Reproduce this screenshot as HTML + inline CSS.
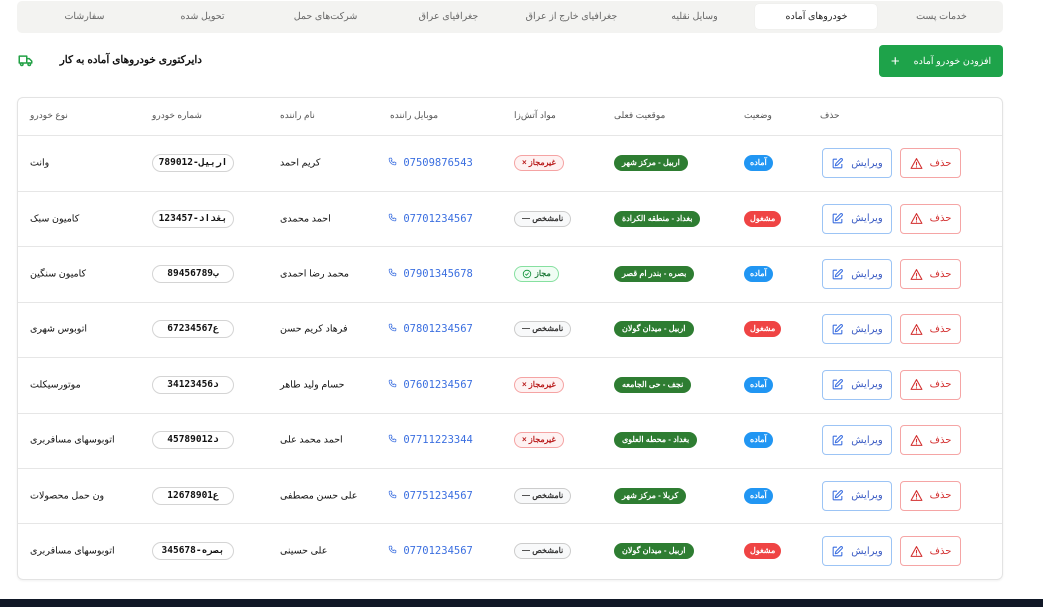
<!DOCTYPE html>
<html><head><meta charset="utf-8">
<style>
*{box-sizing:border-box;margin:0;padding:0}
body{width:1043px;height:607px;background:#fff;position:relative;overflow:hidden;font-family:"Liberation Sans","Noto Sans CJK SC",sans-serif;color:#111}
.a{position:absolute;white-space:nowrap}
.tabs{left:17px;top:1px;width:986px;height:32px;background:#f3f3f1;border-radius:5px}
.tab{position:absolute;top:10px;font-size:9.5px;color:#666;width:123px;text-align:center;direction:rtl}
.act{left:738px;top:3px;width:122px;height:25px;background:#fff;border-radius:4px;position:absolute;box-shadow:0 0 1px rgba(0,0,0,.1)}
.card{left:17px;top:97px;width:986px;height:483px;border:1px solid #e3e3e3;border-radius:6px;box-shadow:0 1px 2px rgba(0,0,0,.06)}
.hd{top:110px;font-size:9px;color:#555;direction:rtl}
.line{left:18px;width:984px;height:1px;background:#e6e6e6}
.row{position:absolute;left:0;width:1043px;height:0}
.c{position:absolute;top:0;transform:translateY(-50%);white-space:nowrap;direction:rtl}
.t{font-size:9.5px;color:#111}
.plate{height:18px;border:1px solid #d4d4d4;border-radius:9px;font-size:9.5px;line-height:16px;text-align:center;width:82px;font-family:"DejaVu Sans Mono","Liberation Mono",monospace;font-weight:bold;letter-spacing:-.5px;direction:ltr;left:152px}
.ph{font-family:"DejaVu Sans Mono","Liberation Mono",monospace;font-size:10.5px;color:#3b6fe0;direction:ltr;left:388px}
.hz{height:16px;border-radius:8px;font-size:8px;font-weight:bold;line-height:14px;padding:0 7px;border:1px solid;left:514px}
.bad{background:#fef2f2;border-color:#f5a3a3;color:#b91c1c}
.unk{background:#f8f9fa;border-color:#ccc;color:#333}
.ok{background:#f0fdf4;border-color:#86e0a0;color:#1e7a3a}
.loc{height:16px;border-radius:8px;background:#2e7d32;color:#fff;font-size:8px;font-weight:bold;line-height:16px;padding:0 8px;left:614px}
.st{height:16px;border-radius:8px;color:#fff;font-size:8px;font-weight:bold;line-height:16px;padding:0 6px;left:744px}
.rd{background:#2196f3}.bz{background:#ef4444}
.btn{height:30px;border-radius:4px;border:1px solid;font-size:10px;display:flex;align-items:center;justify-content:center;gap:7px}
.del{width:61px;border-color:#f5a5a5;color:#d32f2f;left:900px}
.ed{width:70px;border-color:#9cc4f5;color:#3b5cc4;left:822px}
.nm{left:280px}.ty{left:30px}
</style></head><body>
<div class="a tabs">
<div class="act"></div>
<div class="tab" style="left:863px">خدمات پست</div>
<div class="tab" style="left:738px;color:#222">خودروهای آماده</div>
<div class="tab" style="left:616px">وسایل نقلیه</div>
<div class="tab" style="left:493px">جغرافیای خارج از عراق</div>
<div class="tab" style="left:370px">جغرافیای عراق</div>
<div class="tab" style="left:247px">شرکت‌های حمل</div>
<div class="tab" style="left:124px">تحویل شده</div>
<div class="tab" style="left:6px">سفارشات</div>
</div>

<div class="a" style="left:18px;top:54px">
<svg width="15" height="13" viewBox="0 0 24 20" fill="none" stroke="#22a045" stroke-width="2.4" stroke-linejoin="round"><path d="M2 3h12v11H2z M14 7h4l4 4v3h-8z"/><circle cx="6" cy="16" r="2" fill="#fff"/><circle cx="18" cy="16" r="2" fill="#fff"/></svg></div>
<div class="a" style="right:841px;top:54px;font-size:10.5px;font-weight:bold;direction:rtl">دایرکتوری خودروهای آماده به کار</div>

<div class="a" style="left:879px;top:45px;width:124px;height:32px;background:#1ea34a;border-radius:4px;color:#fff;font-size:9.5px;display:flex;align-items:center;justify-content:center;gap:14px;direction:rtl">افزودن خودرو آماده <span style="font-size:15px;font-weight:300">+</span></div>

<div class="a card"></div>
<div class="a hd" style="left:820px">حذف</div>
<div class="a hd" style="left:744px">وضعیت</div>
<div class="a hd" style="left:614px">موقعیت فعلی</div>
<div class="a hd" style="left:514px">مواد آتش‌زا</div>
<div class="a hd" style="left:390px">موبایل راننده</div>
<div class="a hd" style="left:280px">نام راننده</div>
<div class="a hd" style="left:152px">شماره خودرو</div>
<div class="a hd" style="left:30px">نوع خودرو</div>
<div class="a line" style="top:135px"></div>
<div class="a line" style="top:191px"></div>
<div class="a line" style="top:246px"></div>
<div class="a line" style="top:302px"></div>
<div class="a line" style="top:357px"></div>
<div class="a line" style="top:413px"></div>
<div class="a line" style="top:468px"></div>
<div class="a line" style="top:523px"></div>

<svg width="0" height="0" style="position:absolute"><defs>
<symbol id="warn" viewBox="0 0 24 24"><path d="M12 3L2 21h20z M12 10v5 M12 18v.5" fill="none" stroke="#d32f2f" stroke-width="2" stroke-linejoin="round" stroke-linecap="round"/></symbol>
<symbol id="edit" viewBox="0 0 24 24"><path d="M11 4H5a1 1 0 0 0-1 1v14a1 1 0 0 0 1 1h14a1 1 0 0 0 1-1v-6 M17.5 3.5a2 2 0 0 1 3 3L12 15l-4 1 1-4z" fill="none" stroke="#3b6fe0" stroke-width="2" stroke-linejoin="round"/></symbol>
<symbol id="phone" viewBox="0 0 24 24"><path d="M5 3h4l2 5-2.5 1.5a11 11 0 0 0 6 6L16 13l5 2v4a2 2 0 0 1-2 2A16 16 0 0 1 3 5a2 2 0 0 1 2-2" fill="none" stroke="#3b6fe0" stroke-width="2"/></symbol>
<symbol id="chk" viewBox="0 0 24 24"><circle cx="12" cy="12" r="9" fill="none" stroke="#1e9a45" stroke-width="2.2"/><path d="M8 12l3 3 5-6" fill="none" stroke="#1e9a45" stroke-width="2.2"/></symbol>
</defs></svg>

<div class="row" style="top:163px">
<div class="c btn del">حذف <svg width="13" height="13"><use href="#warn"/></svg></div>
<div class="c btn ed">ویرایش <svg width="13" height="13"><use href="#edit"/></svg></div>
<div class="c st rd">آماده</div>
<div class="c loc">اربیل - مرکز شهر</div>
<div class="c hz bad">غیرمجاز ×</div>
<div class="c ph"><svg width="9" height="9"><use href="#phone"/></svg> 07509876543</div>
<div class="c t nm">کریم احمد</div>
<div class="c plate">789012-اربیل</div>
<div class="c t ty">وانت</div>
</div>

<div class="row" style="top:218.5px">
<div class="c btn del">حذف <svg width="13" height="13"><use href="#warn"/></svg></div>
<div class="c btn ed">ویرایش <svg width="13" height="13"><use href="#edit"/></svg></div>
<div class="c st bz">مشغول</div>
<div class="c loc">بغداد - منطقه الکرادة</div>
<div class="c hz unk">نامشخص —</div>
<div class="c ph"><svg width="9" height="9"><use href="#phone"/></svg> 07701234567</div>
<div class="c t nm">احمد محمدی</div>
<div class="c plate">123457-بغداد</div>
<div class="c t ty">کامیون سبک</div>
</div>

<div class="row" style="top:274px">
<div class="c btn del">حذف <svg width="13" height="13"><use href="#warn"/></svg></div>
<div class="c btn ed">ویرایش <svg width="13" height="13"><use href="#edit"/></svg></div>
<div class="c st rd">آماده</div>
<div class="c loc">بصره - بندر ام قصر</div>
<div class="c hz ok" style="display:flex;align-items:center;gap:3px">مجاز <svg width="10" height="10"><use href="#chk"/></svg></div>
<div class="c ph"><svg width="9" height="9"><use href="#phone"/></svg> 07901345678</div>
<div class="c t nm">محمد رضا احمدی</div>
<div class="c plate">ب89456789</div>
<div class="c t ty">کامیون سنگین</div>
</div>

<div class="row" style="top:329px">
<div class="c btn del">حذف <svg width="13" height="13"><use href="#warn"/></svg></div>
<div class="c btn ed">ویرایش <svg width="13" height="13"><use href="#edit"/></svg></div>
<div class="c st bz">مشغول</div>
<div class="c loc">اربیل - میدان گولان</div>
<div class="c hz unk">نامشخص —</div>
<div class="c ph"><svg width="9" height="9"><use href="#phone"/></svg> 07801234567</div>
<div class="c t nm">فرهاد کریم حسن</div>
<div class="c plate">ع67234567</div>
<div class="c t ty">اتوبوس شهری</div>
</div>

<div class="row" style="top:384.5px">
<div class="c btn del">حذف <svg width="13" height="13"><use href="#warn"/></svg></div>
<div class="c btn ed">ویرایش <svg width="13" height="13"><use href="#edit"/></svg></div>
<div class="c st rd">آماده</div>
<div class="c loc">نجف - حی الجامعه</div>
<div class="c hz bad">غیرمجاز ×</div>
<div class="c ph"><svg width="9" height="9"><use href="#phone"/></svg> 07601234567</div>
<div class="c t nm">حسام ولید طاهر</div>
<div class="c plate">د34123456</div>
<div class="c t ty">موتورسیکلت</div>
</div>

<div class="row" style="top:440px">
<div class="c btn del">حذف <svg width="13" height="13"><use href="#warn"/></svg></div>
<div class="c btn ed">ویرایش <svg width="13" height="13"><use href="#edit"/></svg></div>
<div class="c st rd">آماده</div>
<div class="c loc">بغداد - محطه العلوی</div>
<div class="c hz bad">غیرمجاز ×</div>
<div class="c ph"><svg width="9" height="9"><use href="#phone"/></svg> 07711223344</div>
<div class="c t nm">احمد محمد علی</div>
<div class="c plate">د45789012</div>
<div class="c t ty">اتوبوسهای مسافربری</div>
</div>

<div class="row" style="top:495.5px">
<div class="c btn del">حذف <svg width="13" height="13"><use href="#warn"/></svg></div>
<div class="c btn ed">ویرایش <svg width="13" height="13"><use href="#edit"/></svg></div>
<div class="c st rd">آماده</div>
<div class="c loc">کربلا - مرکز شهر</div>
<div class="c hz unk">نامشخص —</div>
<div class="c ph"><svg width="9" height="9"><use href="#phone"/></svg> 07751234567</div>
<div class="c t nm">علی حسن مصطفی</div>
<div class="c plate">ع12678901</div>
<div class="c t ty">ون حمل محصولات</div>
</div>

<div class="row" style="top:551px">
<div class="c btn del">حذف <svg width="13" height="13"><use href="#warn"/></svg></div>
<div class="c btn ed">ویرایش <svg width="13" height="13"><use href="#edit"/></svg></div>
<div class="c st bz">مشغول</div>
<div class="c loc">اربیل - میدان گولان</div>
<div class="c hz unk">نامشخص —</div>
<div class="c ph"><svg width="9" height="9"><use href="#phone"/></svg> 07701234567</div>
<div class="c t nm">علی حسینی</div>
<div class="c plate">345678-بصره</div>
<div class="c t ty">اتوبوسهای مسافربری</div>
</div>

<div class="a" style="left:0;top:599px;width:1043px;height:8px;background:#111827"></div>
</body></html>
